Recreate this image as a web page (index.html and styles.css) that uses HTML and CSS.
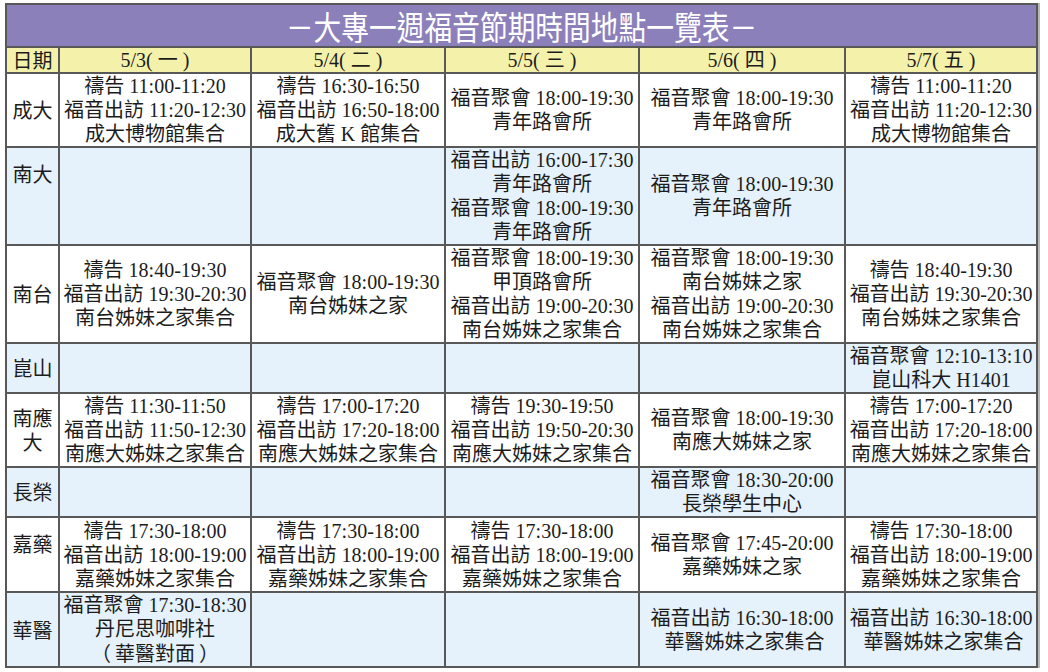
FILE: index.html
```html
<!DOCTYPE html>
<html lang="zh-Hant">
<head>
<meta charset="utf-8">
<title>大專一週福音節期時間地點一覽表</title>
<link rel="stylesheet" href="styles.css">
</head>
<body>
<div class="page">
<table class="sched">
  <colgroup>
    <col class="c-label"><col class="c-d1"><col class="c-d2"><col class="c-d3"><col class="c-d4"><col class="c-d5">
  </colgroup>
  <tr class="r-title">
    <td class="title" colspan="6"><span class="title-text">－大專一週福音節期時間地點一覽表－</span></td>
  </tr>
  <tr class="r-head">
    <th class="label">日期</th>
    <th>5/3( 一 )</th>
    <th>5/4( 二 )</th>
    <th>5/5( 三 )</th>
    <th>5/6( 四 )</th>
    <th>5/7( 五 )</th>
  </tr>
  <tr class="r3 white">
    <td class="label">成大</td>
    <td>禱告 11:00-11:20<br>福音出訪 11:20-12:30<br>成大博物館集合</td>
    <td>禱告 16:30-16:50<br>福音出訪 16:50-18:00<br>成大舊 K 館集合</td>
    <td>福音聚會 18:00-19:30<br>青年路會所</td>
    <td>福音聚會 18:00-19:30<br>青年路會所</td>
    <td>禱告 11:00-11:20<br>福音出訪 11:20-12:30<br>成大博物館集合</td>
  </tr>
  <tr class="r4 blue">
    <td class="label"><span class="lift-2">南大</span></td>
    <td></td>
    <td></td>
    <td>福音出訪 16:00-17:30<br>青年路會所<br>福音聚會 18:00-19:30<br>青年路會所</td>
    <td>福音聚會 18:00-19:30<br>青年路會所</td>
    <td></td>
  </tr>
  <tr class="r4 white">
    <td class="label">南台</td>
    <td>禱告 18:40-19:30<br>福音出訪 19:30-20:30<br>南台姊妹之家集合</td>
    <td>福音聚會 18:00-19:30<br>南台姊妹之家</td>
    <td>福音聚會 18:00-19:30<br>甲頂路會所<br>福音出訪 19:00-20:30<br>南台姊妹之家集合</td>
    <td>福音聚會 18:00-19:30<br>南台姊妹之家<br>福音出訪 19:00-20:30<br>南台姊妹之家集合</td>
    <td>禱告 18:40-19:30<br>福音出訪 19:30-20:30<br>南台姊妹之家集合</td>
  </tr>
  <tr class="r2 blue">
    <td class="label">崑山</td>
    <td></td>
    <td></td>
    <td></td>
    <td></td>
    <td>福音聚會 12:10-13:10<br>崑山科大 H1401</td>
  </tr>
  <tr class="r3 white">
    <td class="label">南應大</td>
    <td>禱告 11:30-11:50<br>福音出訪 11:50-12:30<br>南應大姊妹之家集合</td>
    <td>禱告 17:00-17:20<br>福音出訪 17:20-18:00<br>南應大姊妹之家集合</td>
    <td>禱告 19:30-19:50<br>福音出訪 19:50-20:30<br>南應大姊妹之家集合</td>
    <td>福音聚會 18:00-19:30<br>南應大姊妹之家</td>
    <td>禱告 17:00-17:20<br>福音出訪 17:20-18:00<br>南應大姊妹之家集合</td>
  </tr>
  <tr class="r2 blue">
    <td class="label">長榮</td>
    <td></td>
    <td></td>
    <td></td>
    <td>福音聚會 18:30-20:00<br>長榮學生中心</td>
    <td></td>
  </tr>
  <tr class="r3l white">
    <td class="label"><span class="lift-1">嘉藥</span></td>
    <td>禱告 17:30-18:00<br>福音出訪 18:00-19:00<br>嘉藥姊妹之家集合</td>
    <td>禱告 17:30-18:00<br>福音出訪 18:00-19:00<br>嘉藥姊妹之家集合</td>
    <td>禱告 17:30-18:00<br>福音出訪 18:00-19:00<br>嘉藥姊妹之家集合</td>
    <td>福音聚會 17:45-20:00<br>嘉藥姊妹之家</td>
    <td>禱告 17:30-18:00<br>福音出訪 18:00-19:00<br>嘉藥姊妹之家集合</td>
  </tr>
  <tr class="r3 blue">
    <td class="label">華醫</td>
    <td>福音聚會 17:30-18:30<br>丹尼思咖啡社<br><span class="fw fw-open">（</span>華醫對面<span class="fw fw-close">）</span></td>
    <td></td>
    <td></td>
    <td>福音出訪 16:30-18:00<br>&nbsp;華醫姊妹之家集合</td>
    <td>福音出訪 16:30-18:00<br>&nbsp;華醫姊妹之家集合</td>
  </tr>
</table>
</div>
</body>
</html>
```

FILE: styles.css
```css
html, body {
  margin: 0;
  padding: 0;
  background: #ffffff;
}

.page {
  padding: 3px 0 0 5px;
}

.sched {
  border-collapse: collapse;
  table-layout: fixed;
  width: 1031px;
  font-family: "Liberation Serif", "Noto Sans CJK TC", serif;
  font-size: 20px;
  line-height: 24px;
  color: #1c1c1c;
  box-shadow: 2px 0 0 #b8b8b8;
}

.c-label { width: 53px; }
.c-d1 { width: 192px; }
.c-d2 { width: 194px; }
.c-d3 { width: 194px; }
.c-d4 { width: 206px; }
.c-d5 { width: 192px; }

.sched td,
.sched th {
  border: 2px solid #585858;
  padding: 0;
  text-align: center;
  vertical-align: middle;
  font-weight: normal;
  white-space: nowrap;
}

.sched td.label,
.sched th.label {
  white-space: normal;
  font-family: "Noto Sans CJK TC", sans-serif;
  padding: 0 4px;
}

.title {
  background: #8c80bb;
  height: 41px;
  border-color: #4a4a4a;
}

.title-text {
  display: inline-block;
  color: #ffffff;
  font-family: "Noto Sans CJK TC", sans-serif;
  font-size: 33px;
  line-height: 38px;
  transform: scaleX(0.84);
}

.r-head th {
  background: #f4f1aa;
  height: 24px;
  line-height: 24px;
}

.white td { background: #ffffff; }
.blue td { background: #e5f1fb; }

.r2 td { height: 47px; }
.r3 td { height: 72px; }
.r3l td { height: 73px; }
.r4 td { height: 96px; }

.fw {
  display: inline-block;
  width: 20px;
  font-family: "Noto Sans CJK TC", sans-serif;
}

.fw-open { text-align: right; padding-right: 4px; }
.fw-close { text-align: left; padding-left: 4px; }

.lift-2 {
  display: block;
  padding-bottom: 44px;
}

.lift-1 {
  display: block;
  padding-bottom: 22px;
}
```
